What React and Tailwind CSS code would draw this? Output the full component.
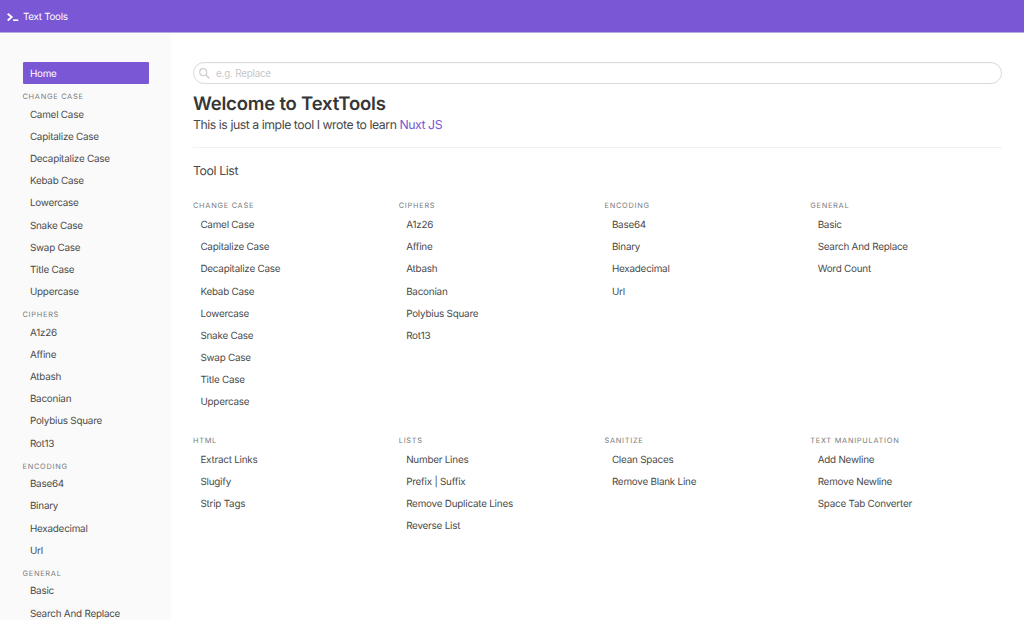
const groups = [
  { name: 'Change Case', items: ['Camel Case', 'Capitalize Case', 'Decapitalize Case', 'Kebab Case', 'Lowercase', 'Snake Case', 'Swap Case', 'Title Case', 'Uppercase'] },
  { name: 'Ciphers', items: ['A1z26', 'Affine', 'Atbash', 'Baconian', 'Polybius Square', 'Rot13'] },
  { name: 'Encoding', items: ['Base64', 'Binary', 'Hexadecimal', 'Url'] },
  { name: 'General', items: ['Basic', 'Search And Replace', 'Word Count'] },
  { name: 'HTML', items: ['Extract Links', 'Slugify', 'Strip Tags'] },
  { name: 'Lists', items: ['Number Lines', 'Prefix | Suffix', 'Remove Duplicate Lines', 'Reverse List'] },
  { name: 'Sanitize', items: ['Clean Spaces', 'Remove Blank Line'] },
  { name: 'Text Manipulation', items: ['Add Newline', 'Remove Newline', 'Space Tab Converter'] },
];

const sidebarGroups = [...groups.slice(0, 3), { name: 'General', items: ['Basic', 'Search And Replace'] }];

function MenuLabel({ children }) {
  return <p className="text-[7.4px] leading-[9.25px] tracking-[0.72px] text-[#7a7a7a] uppercase whitespace-nowrap">{children}</p>;
}

function MenuList({ items }) {
  return (
    <ul>
      {items.map((item) => (
        <li key={item} className="h-[22.17px] pt-[0.8px] pl-[7.4px] leading-[22.17px] whitespace-nowrap">
          <a>{item}</a>
        </li>
      ))}
    </ul>
  );
}

export default function App() {
  return (
    <div className="flex h-[620px] flex-col overflow-hidden bg-white font-['Inter',sans-serif] text-[9.87px] tracking-[-0.22px] text-[#4a4a4a] [text-rendering:geometricPrecision]">
      <nav className="flex h-[33px] shrink-0 items-center border-b border-[#b9a8e8] bg-[#7957d5] pl-[7px] text-white">
        <svg className="mt-[2px] mr-[4px] h-[9px] w-[12px]" viewBox="0 0 12 9" fill="none" stroke="currentColor">
          <path d="M0.7 0.8L4.7 4.1L0.7 7.4" strokeWidth="1.9" />
          <path d="M6 7.2H11.3" strokeWidth="1.6" />
        </svg>
        <span className="mt-[3px] tracking-[-0.3px]">Text Tools</span>
      </nav>
      <div className="flex min-h-0 flex-1">
        <aside className="w-[171px] shrink-0 overflow-hidden bg-[#fafafa] px-[22.5px] pt-[29.2px]">
          <a className="block h-[22.17px] rounded-[1.2px] bg-[#7957d5] pt-[0.8px] pl-[7.4px] leading-[22.17px] text-white">Home</a>
          {sidebarGroups.map((group) => (
            <section key={group.name}>
              <div className="pt-[7.75px] pb-[1.6px]"><MenuLabel>{group.name}</MenuLabel></div>
              <MenuList items={group.items} />
            </section>
          ))}
        </aside>
        <main className="min-w-0 flex-1 pt-[29px] pr-[22.5px] pl-[22px]">
          <label className="flex h-[22.2px] items-center rounded-full border border-[#dbdbdb] pl-[5px] shadow-[inset_0_0.6px_1px_rgba(10,10,10,0.05)]">
            <svg className="mr-[6px] size-[11px] text-[#d0d0d0]" viewBox="0 0 11 11" fill="none" stroke="currentColor">
              <circle cx="4.2" cy="4.2" r="3.5" strokeWidth="1.2" />
              <path d="M6.7 6.7L10.5 10.5" strokeWidth="1.5" />
            </svg>
            <input className="flex-1 bg-transparent outline-none placeholder:text-[#c8c8c8]" placeholder="e.g. Replace" />
          </label>
          <h1 className="mt-[9px] text-[18.5px] leading-[22px] font-semibold tracking-[-0.2px] text-[#363636]">Welcome to TextTools</h1>
          <p className="mt-[0.7px] text-[12.3px] leading-[18px] tracking-[-0.46px]">
            This is just a imple tool I wrote to learn <a className="text-[#7957d5]">Nuxt JS</a>
          </p>
          <hr className="mt-[12.8px] h-[1.2px] border-0 bg-[#f1f1f1]" />
          <h2 className="mt-[15px] text-[12.3px] leading-[16px] tracking-[-0.4px]">Tool List</h2>
          <div className="mt-[22.6px] grid grid-cols-[repeat(4,205.75px)] gap-y-[23.2px]">
            {groups.map((group) => (
              <section key={group.name}>
                <div className="pb-[2.6px]"><MenuLabel>{group.name}</MenuLabel></div>
                <MenuList items={group.items} />
              </section>
            ))}
          </div>
        </main>
      </div>
    </div>
  );
}
